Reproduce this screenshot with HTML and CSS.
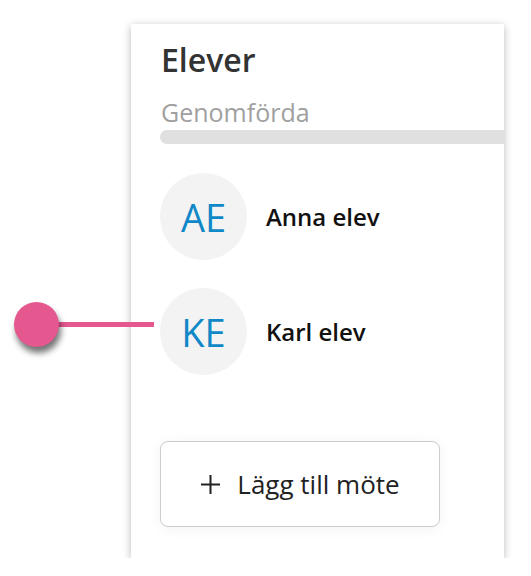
FILE: index.html
```html
<!DOCTYPE html>
<html lang="sv">
<head>
    <meta charset="UTF-8">
    <meta name="viewport" content="width=device-width, initial-scale=1.0">
    <title>Elever</title>
    <link rel="stylesheet" href="styles.css">
</head>
<body>
    <div class="stage">
        <!-- markör som pekar på vald elev -->
        <div class="pointer">
            <span class="pointer-dot"></span>
            <span class="pointer-line"></span>
        </div>
        <div class="card">
            <h2 class="card-title">Elever</h2>
            <div class="progress-label">Genomförda</div>
            <div class="progress"></div>
            <ul class="students">
                <li class="student">
                    <span class="avatar">AE</span>
                    <span class="student-name">Anna elev</span>
                </li>
                <li class="student">
                    <span class="avatar">KE</span>
                    <span class="student-name">Karl elev</span>
                </li>
            </ul>
            <button class="btn-add" type="button">
                <svg class="btn-icon" width="21" height="21" viewBox="0 0 21 21">
                    <path d="M10.5 1v19M1 10.5h19" stroke="#222" stroke-width="2" fill="none"/>
                </svg>
                <span>Lägg till möte</span>
            </button>
        </div>
    </div>
</body>
</html>
```

FILE: styles.css
```css
body {
    margin: 0;
    background: #FFFFFF;
    font-family: "Open Sans", "Noto Sans", sans-serif;
    overflow: hidden;
}
.stage {
    position: relative;
    padding: 24px 0 0 131px;
    width: 373px;
}
.card {
    background: #FFFFFF;
    box-shadow: 0 2px 8px rgba(0, 0, 0, 0.28);
    height: 534px;
    padding: 16px 0 0 29px;
    box-sizing: border-box;
    overflow: hidden;
}
.card-title {
    margin: 0 0 0 1px;
    font-size: 32px;
    font-weight: 600;
    color: #333333;
    line-height: 40px;
}
.progress-label {
    margin: 17px 0 0 1px;
    font-size: 25px;
    color: #A0A0A0;
    line-height: 30px;
}
.progress {
    margin-top: 3px;
    height: 14px;
    background: #E0E0E0;
    border-radius: 7px 0 0 7px;
}
.students {
    list-style: none;
    margin: 29px 0 0;
    padding: 0;
}
.student {
    display: flex;
    align-items: center;
    margin-bottom: 28px;
}
.avatar {
    width: 87px;
    height: 87px;
    border-radius: 50%;
    background: #F3F3F3;
    color: #0F88C7;
    font-size: 38px;
    display: flex;
    align-items: center;
    justify-content: center;
}
.student-name {
    margin-left: 19px;
    font-size: 24px;
    font-weight: 600;
    color: #111111;
}
.btn-add {
    margin-top: 66px;
    width: 280px;
    height: 86px;
    border: 1px solid #CCCCCC;
    border-radius: 8px;
    background: #FFFFFF;
    box-shadow: 0 2px 14px rgba(0, 0, 0, 0.05);
    display: flex;
    align-items: center;
    justify-content: center;
    gap: 16px;
    font-family: inherit;
    font-size: 26px;
    color: #222222;
    padding: 0;
}
.pointer {
    position: absolute;
    left: 14px;
    top: 302px;
    display: flex;
    align-items: center;
}
.pointer-dot {
    width: 45px;
    height: 45px;
    border-radius: 50%;
    background: #E4578F;
    box-shadow: 2px 6px 6px rgba(0, 0, 0, 0.55);
    position: relative;
    z-index: 2;
}
.pointer-line {
    width: 100px;
    height: 5px;
    background: #E4578F;
    margin-left: -5px;
}
```
